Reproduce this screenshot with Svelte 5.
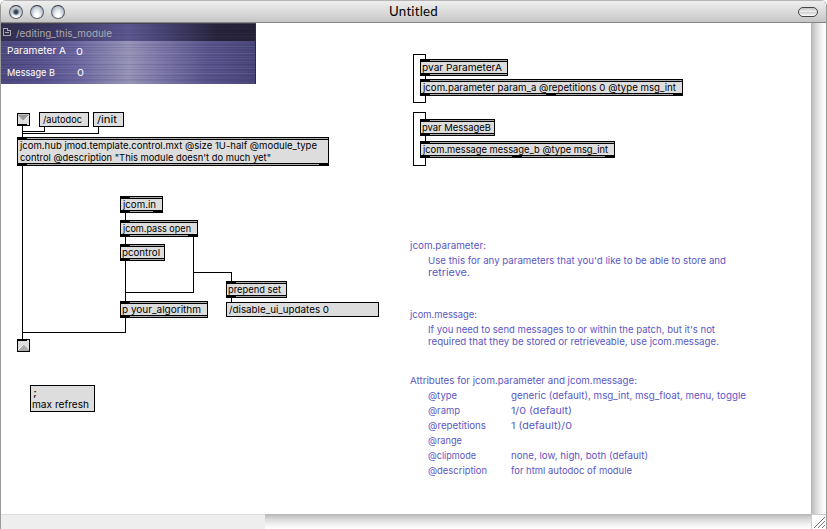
<script>
  // Object boxes: position, size and outlet offsets
  const objects = [
    { x: 17, y: 137, w: 312, h: 29, outs: [0, 302] },
    { x: 120, y: 196, w: 43, h: 17, outs: [0, 33] },
    { x: 120, y: 220, w: 78, h: 17, outs: [0, 68] },
    { x: 120, y: 244, w: 45, h: 17, outs: [0] },
    { x: 120, y: 301, w: 88, h: 17, outs: [0] },
    { x: 226, y: 281, w: 61, h: 17, outs: [0] },
    { x: 420, y: 59, w: 88, h: 17, outs: [0] },
    { x: 420, y: 79, w: 263, h: 17, outs: [0, 126, 253] },
    { x: 420, y: 119, w: 75, h: 17, outs: [0] },
    { x: 420, y: 141, w: 195, h: 17, outs: [0, 92, 185] }
  ];

  const messages = [
    [39, 112, 50, 15],
    [93, 112, 31, 15],
    [226, 302, 153, 15],
    [30, 385, 65, 27]
  ];

  const wires = [
    'M22.5 126V137', 'M44.5 127V131.5H22.5', 'M98.5 127V133.5H22.5',
    'M22.5 166V339', 'M125.5 318V332.5H22.5',
    'M125.5 213V220', 'M125.5 237V244', 'M125.5 261V301',
    'M193.5 237V292.5H125.5', 'M193.5 272.5H231.5V281', 'M231.5 298V302',
    'M425.5 59V54.5H413.5V102.5H425.5V96', 'M425.5 76V79',
    'M425.5 119V112.5H413.5V165.5H425.5V158', 'M425.5 136V141'
  ];

  // Labels: left, right, baseline, text
  const labels = [
    [20, 317, 148.5, 'jcom.hub jmod.template.control.mxt @size 1U-half @module_type'],
    [20, 271, 160.5, 'control @description "This module doesn\'t do much yet"'],
    [43, 82, 122.5, '/autodoc'],
    [97, 117, 122.5, '/init'],
    [123, 156, 207.5, 'jcom.in'],
    [123, 191, 231.5, 'jcom.pass open'],
    [122, 160, 255.5, 'pcontrol'],
    [122, 201, 312.5, 'p your_algorithm'],
    [228, 281, 292.5, 'prepend set'],
    [229, 329, 312.5, '/disable_ui_updates 0'],
    [33, 37, 395.5, ';'],
    [32, 89, 407.5, 'max refresh'],
    [422, 502, 70.5, 'pvar ParameterA'],
    [423, 676, 90.5, 'jcom.parameter param_a @repetitions 0 @type msg_int'],
    [422, 491, 130.5, 'pvar MessageB'],
    [423, 608, 152.5, 'jcom.message message_b @type msg_int']
  ];

  const comments = [
    [410, 486, 248.5, 'jcom.parameter:'],
    [428, 726, 263.5, "Use this for any parameters that you'd like to be able to store and"],
    [428, 470, 275.5, 'retrieve.'],
    [410, 477, 317.5, 'jcom.message:'],
    [428, 715, 332.5, "If you need to send messages to or within the patch, but it's not"],
    [428, 719, 344.5, 'required that they be stored or retrieveable, use jcom.message.'],
    [410, 637, 383.5, 'Attributes for jcom.parameter and jcom.message:'],
    [428, 457, 398.5, '@type'],
    [428, 460, 413.5, '@ramp'],
    [428, 486, 428.5, '@repetitions'],
    [428, 462, 443.5, '@range'],
    [428, 476, 458.5, '@clipmode'],
    [428, 487, 473.5, '@description'],
    [511, 746, 398.5, 'generic (default), msg_int, msg_float, menu, toggle'],
    [511, 572, 413.5, '1/0 (default)'],
    [511, 572, 428.5, '1 (default)/0'],
    [511, 648, 458.5, 'none, low, high, both (default)'],
    [511, 632, 473.5, 'for html autodoc of module']
  ];

  const panelText = [
    [7, 66, 53.5, 'Parameter A'],
    [76, 83, 54.5, '0'],
    [7, 55, 75.5, 'Message B'],
    [77, 84, 75.5, '0']
  ];

  // Fine horizontal streaks of the brushed panel
  const streaks = Array.from({ length: 60 }, (_, i) => ({
    y: 24 + i,
    o: ((i * 37 + ((i * i) % 11) * 13) % 17) / 17 * 0.17,
    dark: (i * 7) % 5 < 3
  }));
</script>

{#snippet line([l, r, y, t])}
  <text x={l} {y} textLength={r - l} lengthAdjust="spacingAndGlyphs">{t}</text>
{/snippet}

<div class="window">
  <header>
    <div class="buttons">
      <i class="orb dot"></i><i class="orb"></i><i class="orb"></i>
    </div>
    <h1>Untitled</h1>
    <i class="pill"></i>
  </header>
  <div class="middle">
    <svg class="patch" width="810" height="491" viewBox="1 23 810 491">
      <defs>
        <linearGradient id="metal">
          <stop offset="0" stop-color="#4c487f" />
          <stop offset=".16" stop-color="#58528c" />
          <stop offset=".3" stop-color="#6c67a0" />
          <stop offset=".5" stop-color="#9895b8" />
          <stop offset=".62" stop-color="#7e79a9" />
          <stop offset=".8" stop-color="#5a558d" />
          <stop offset="1" stop-color="#484478" />
        </linearGradient>
        <linearGradient id="strip">
          <stop offset="0" stop-color="#302d4c" />
          <stop offset=".2" stop-color="#39355f" />
          <stop offset=".5" stop-color="#5b568f" />
          <stop offset=".68" stop-color="#3f3b67" />
          <stop offset=".85" stop-color="#252239" />
          <stop offset="1" stop-color="#232036" />
        </linearGradient>
      </defs>

      <g shape-rendering="crispEdges">
        <rect x="1" y="23" width="255" height="61" fill="url(#metal)" />
        <rect x="1" y="23" width="255" height="18" fill="url(#strip)" />
        {#each streaks as s}
          <rect x="1" y={s.y} width="255" height="1" fill={s.dark ? '#25204f' : '#aaa6d0'} opacity={s.y < 41 ? s.o * 0.5 : s.o} />
        {/each}
        <path d="M1 23.5H256" stroke="#45424f" />
        <path d="M255.5 24V84" stroke="#2c2850" />
        <path d="M3.5 28.5H7.5V30.5H10.5V35.5H3.5ZM5 32.5H9" fill="none" stroke="#aaa9ad" />
      </g>
      <g class="title-text">{@render line([16, 112, 36.5, '/editing_this_module'])}</g>
      <g class="panel-text">
        {#each panelText as p}{@render line(p)}{/each}
      </g>

      <g class="wires" shape-rendering="crispEdges">
        {#each wires as d}<path {d} />{/each}
      </g>

      <g shape-rendering="crispEdges">
        {#each objects as b}
          <rect x={b.x} y={b.y} width={b.w} height={b.h} />
          <rect x={b.x + 1} y={b.y + 1} width={b.w - 2} height="1" fill="#aaa" />
          <rect x={b.x + 1} y={b.y + 3} width={b.w - 2} height={b.h - 6} fill="#ddd" />
          <rect x={b.x + 1} y={b.y + b.h - 2} width={b.w - 2} height="1" fill="#aaa" />
          <rect x={b.x} y={b.y} width="10" height="3" />
          {#each b.outs as o}
            <rect x={b.x + o} y={b.y + b.h - 3} width="10" height="3" />
          {/each}
        {/each}
        {#each messages as [x, y, w, h]}
          <rect x={x + 0.5} y={y + 0.5} width={w - 1} height={h - 1} fill="#ddd" stroke="#000" />
        {/each}
      </g>

      <rect x="17.5" y="113.5" width="12" height="12" fill="#ddd" stroke="#000" />
      <path d="M18 114.5H29V115L23.5 121L18 115Z" fill="#999" />
      <path d="M23.5 121L29 115.5" fill="none" stroke="#fff" />
      <path d="M18 124.5H27" stroke="#000" />
      <rect x="17.5" y="339.5" width="12" height="12" fill="#ddd" stroke="#000" />
      <path d="M18 351V350L23.5 344.5L29 350V351Z" fill="#aaa" />
      <path d="M18 350L23.5 344.5" fill="none" stroke="#fff" />
      <path d="M18 340.5H27" stroke="#000" />

      <g class="labels">
        {#each labels as l}{@render line(l)}{/each}
      </g>
      <g class="comments">
        {#each comments as c}{@render line(c)}{/each}
      </g>
    </svg>
    <div class="vbar"></div>
  </div>
  <footer>
    <div class="status"></div>
    <div class="hbar"></div>
    <svg class="grip" width="15" height="15" viewBox="0 0 15 15">
      <path d="M3 14L14 3M7 14L14 7M11 14L14 11" stroke="#777" />
    </svg>
  </footer>
</div>

<style>
  :global(body) {
    background: #fff;
    overflow: hidden;
  }
  .window {
    width: 827px;
    height: 529px;
    box-sizing: border-box;
    display: flex;
    flex-direction: column;
    border-left: 1px solid #999;
    border-right: 1px solid #999;
    border-radius: 6px 6px 0 0;
    overflow: hidden;
    background: #fff;
  }
  header {
    height: 23px;
    flex: none;
    box-sizing: border-box;
    display: flex;
    align-items: center;
    justify-content: space-between;
    padding: 1px 8px 0 8px;
    border-top: 1px solid #b5b5b5;
    border-bottom: 1px solid #858585;
    background: linear-gradient(#eeeeee, #dcdcdc 50%, #c5c5c5);
  }
  .buttons {
    display: flex;
    gap: 7px;
    width: 70px;
  }
  .orb {
    width: 14px;
    height: 14px;
    box-sizing: border-box;
    border-radius: 50%;
    border: 1px solid #5a6068;
    border-top-color: #34383f;
    background: radial-gradient(ellipse at 50% 90%, #fff 0 20%, #dfe7ee 45%, #b0bac4 75%, #7f8995);
  }
  .dot {
    background:
      radial-gradient(circle at 50% 50%, #354555 0 1.5px, #35455599 2.5px, transparent 4px),
      radial-gradient(ellipse at 50% 90%, #fff 0 20%, #dfe7ee 45%, #b0bac4 75%, #7f8995);
  }
  h1 {
    margin: 0 0 2px;
    font: 13.3px/19px "Lato", "Open Sans", sans-serif;
    letter-spacing: 0.2px;
    color: #000;
  }
  .pill {
    width: 20px;
    height: 10px;
    margin-left: 50px;
    box-sizing: border-box;
    border: 1.5px solid #444;
    border-radius: 5px;
    background: linear-gradient(#c4c4c4, #eee 45%, #ccc 50%, #fff);
  }
  .middle {
    display: flex;
    height: 491px;
    flex: none;
  }
  .patch {
    display: block;
    flex: none;
    background: #fff;
  }
  .vbar {
    flex: 1;
    background: linear-gradient(90deg, #b5b5b5, #dadada 35%, #f5f5f5 75%, #fff);
  }
  footer {
    display: flex;
    height: 15px;
    flex: none;
  }
  .status {
    width: 264px;
    background: #eee;
    border-top: 1px solid #ddd;
    box-sizing: border-box;
  }
  .hbar {
    flex: 1;
    background: linear-gradient(#b5b5b5, #dadada 35%, #f5f5f5 75%, #fff);
  }
  .grip {
    display: block;
    flex: none;
    background: #fff;
    box-shadow: inset 1px 1px #ccc;
  }
  text {
    font-family: "Inter", "Open Sans", sans-serif;
    font-size: 9.6px;
    white-space: pre;
  }
  .wires path {
    fill: none;
    stroke: #000;
  }
  .labels {
    fill: #000;
  }
  .comments {
    fill: #5b57c4;
  }
  .title-text {
    fill: #aaa9b0;
  }
  .panel-text {
    fill: #fff;
  }
</style>
